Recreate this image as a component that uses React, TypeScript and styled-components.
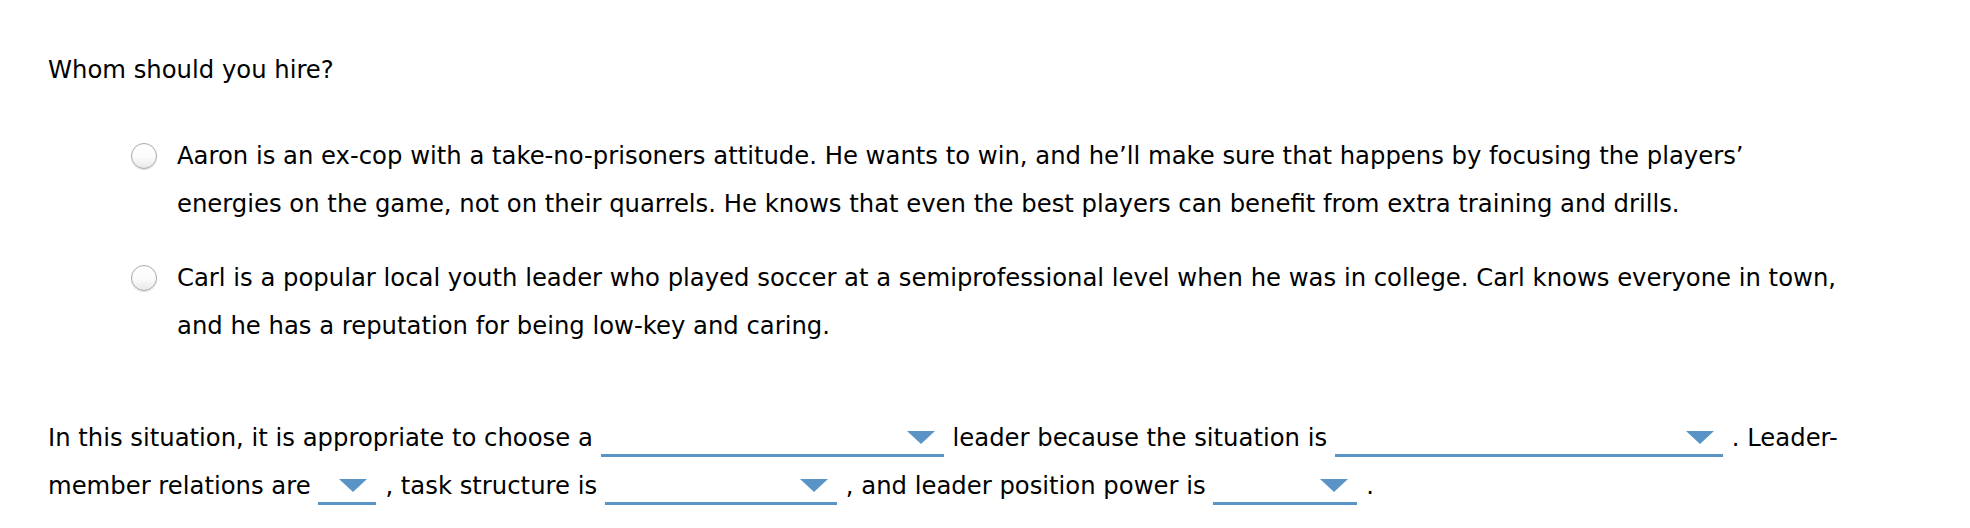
import React, { useState } from "react";
import styled, { createGlobalStyle } from "styled-components";

const GlobalStyle = createGlobalStyle`
  html, body {
    margin: 0;
    padding: 0;
    background: #ffffff;
  }
  body {
    font-family: "DejaVu Sans", Verdana, sans-serif;
    color: #000000;
  }
`;

const choices = [
  "Aaron is an ex-cop with a take-no-prisoners attitude. He wants to win, and he\u2019ll make sure that happens by focusing the players\u2019 energies on the game, not on their quarrels. He knows that even the best players can benefit from extra training and drills.",
  "Carl is a popular local youth leader who played soccer at a semiprofessional level when he was in college. Carl knows everyone in town, and he has a reputation for being low-key and caring.",
];

const App = () => {
  const [picked, setPicked] = useState<number | null>(null);

  return (
    <Page>
      <GlobalStyle />
      <Question>Whom should you hire?</Question>
      <ChoiceList>
        {choices.map((text, i) => (
          <Choice key={i} onClick={() => setPicked(i)}>
            <Radio checked={picked === i} />
            <ChoiceText>{text}</ChoiceText>
          </Choice>
        ))}
      </ChoiceList>
      <FillIn>
        In this situation, it is appropriate to choose a{" "}
        <Dropdown width={343}>
          <Arrow />
        </Dropdown>
        leader because the situation is{" "}
        <Dropdown width={388}>
          <Arrow />
        </Dropdown>
        . Leader-member relations are{" "}
        <Dropdown width={58}>
          <Arrow />
        </Dropdown>
        , task structure is{" "}
        <Dropdown width={232}>
          <Arrow />
        </Dropdown>
        , and leader position power is{" "}
        <Dropdown width={144}>
          <Arrow />
        </Dropdown>
        .
      </FillIn>
    </Page>
  );
};

export default App;

const Page = styled.div`
  padding: 46px 130px 0 48px;
  font-size: 24.3px;
  line-height: 48px;
`;

const Question = styled.div`
  margin: 0;
`;

const ChoiceList = styled.div`
  display: flex;
  flex-direction: column;
  gap: 26px;
  margin-top: 38px;
  padding-left: 83px;
`;

const Choice = styled.div`
  display: flex;
  align-items: flex-start;
  cursor: pointer;
`;

const Radio = styled.span<{ checked: boolean }>`
  flex: none;
  box-sizing: border-box;
  width: 26px;
  height: 26px;
  margin-top: 11px;
  margin-right: 20px;
  border-radius: 50%;
  border: 1px solid #a8a8a8;
  background: ${(p) =>
    p.checked
      ? "radial-gradient(circle, #3a78c2 0 5px, #ffffff 6px)"
      : "linear-gradient(#ffffff 0%, #fbfbfb 55%, #e9e9e9 100%)"};
  box-shadow: 0 1px 1px rgba(0, 0, 0, 0.12);
`;

const ChoiceText = styled.div`
  flex: 1;
`;

const FillIn = styled.p`
  margin: 64px -30px 0 0;
`;

const Dropdown = styled.span<{ width: number }>`
  box-sizing: border-box;
  display: inline-block;
  overflow: hidden;
  width: ${(p) => p.width}px;
  height: 32px;
  padding: 6px 9px 0 0;
  margin-right: 9px;
  border-bottom: 3px solid #5a94c6;
  vertical-align: -11px;
  cursor: pointer;
`;

const Arrow = styled.span`
  display: block;
  width: 0;
  height: 0;
  margin-left: auto;
  border-left: 14px solid transparent;
  border-right: 14px solid transparent;
  border-top: 13px solid #5a94c6;
`;
